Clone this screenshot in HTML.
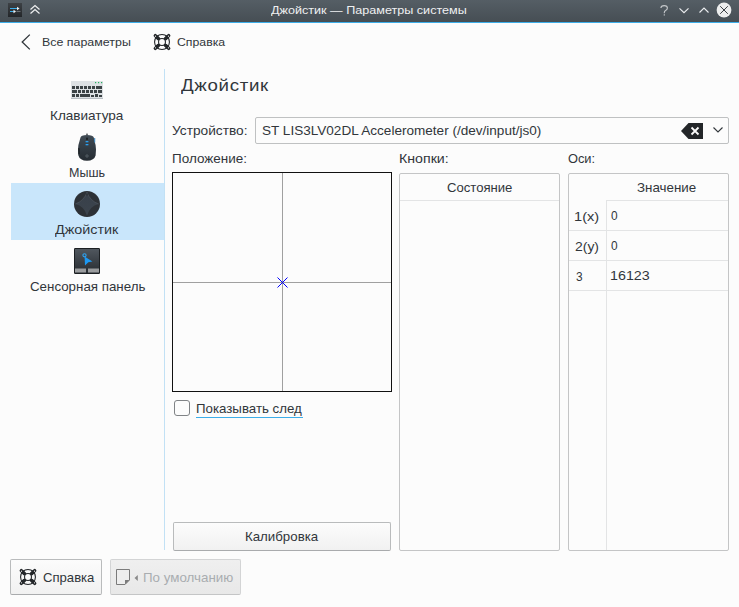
<!DOCTYPE html>
<html><head><meta charset="utf-8"><style>
*{margin:0;padding:0;box-sizing:border-box}
html,body{width:739px;height:607px;overflow:hidden;background:#fcfcfc;font-family:"Liberation Sans",sans-serif;color:#31363b}
.a{position:absolute}
.t{position:absolute;white-space:nowrap;transform-origin:0 0}
svg{position:absolute;overflow:visible}
</style></head><body>
<div class="a" style="left:0;top:0;width:739px;height:22px;background:linear-gradient(#555e65,#464e54)"></div>
<div class="a" style="left:0;top:22px;width:739px;height:1px;background:#3daee9"></div>
<svg style="left:8px;top:3px" width="14" height="14" viewBox="0 0 14 14">
<defs><linearGradient id="ag" x1="0" y1="0" x2="0" y2="1"><stop offset="0" stop-color="#3d4145"/><stop offset="1" stop-color="#232629"/></linearGradient></defs>
<rect x="0" y="0" width="14" height="14" fill="url(#ag)"/>
<rect x="2" y="5" width="8" height="1" fill="#3daee9"/><path d="M9 3.8 L11.5 5.5 L9 7.2 Z" fill="#eff0f1"/>
<rect x="2" y="8" width="4" height="1" fill="#3daee9"/><rect x="8.5" y="8" width="4" height="1" fill="#6b7075"/><path d="M5.5 6.8 L8 8.5 L5.5 10.2 Z" fill="#eff0f1"/>
</svg>
<svg style="left:30px;top:5px" width="10" height="9" viewBox="0 0 10 9">
<path d="M0.5 4.5 L5 0.5 L9.5 4.5 M0.5 8.5 L5 4.5 L9.5 8.5" fill="none" stroke="#eff0f1" stroke-width="1.2"/>
</svg>
<svg style="left:660px;top:5px" width="9" height="11" viewBox="0 0 9 11"><path d="M0.9 3 Q0.9 0.6 4.2 0.6 Q7.4 0.6 7.4 3 Q7.4 4.6 5.6 5.4 Q4.3 6 4.3 7.6 V8.2" fill="none" stroke="#c4c7ca" stroke-width="1.1"/><rect x="3.7" y="9.3" width="1.2" height="1.2" fill="#c4c7ca"/></svg>
<svg style="left:679px;top:8px" width="10" height="6" viewBox="0 0 10 6"><path d="M0.5 0.3 L5 4.7 L9.5 0.3" fill="none" stroke="#eceef0" stroke-width="1.1"/></svg>
<svg style="left:699px;top:7px" width="10" height="6" viewBox="0 0 10 6"><path d="M0.5 5.5 L5 1 L9.5 5.5" fill="none" stroke="#eceef0" stroke-width="1.1"/></svg>
<svg style="left:716px;top:2px" width="16" height="16" viewBox="0 0 16 16"><circle cx="8" cy="8" r="7.4" fill="#eceded"/>
<path d="M4.2 4.2 L11.8 11.8 M11.8 4.2 L4.2 11.8" stroke="#3a3f44" stroke-width="1"/></svg>
<svg style="left:21px;top:34px" width="10" height="16" viewBox="0 0 10 16"><path d="M8.8 0.6 L1.2 8 L8.8 15.4" fill="none" stroke="#31363b" stroke-width="1.3"/></svg>
<svg style="left:154px;top:34px" width="16" height="16" viewBox="0 0 16 16">
<circle cx="8" cy="8" r="7.45" fill="none" stroke="#232629" stroke-width="1.1"/>
<path d="M2 2 L14 14 M14 2 L2 14" stroke="#232629" stroke-width="2.7"/>
<path d="M1.3 1.6 L4.2 4.5 M14.7 1.6 L11.8 4.5 M1.3 14.4 L4.2 11.5 M14.7 14.4 L11.8 11.5" stroke="#232629" stroke-width="3.4" stroke-linecap="round"/>
<circle cx="8" cy="8" r="3.45" fill="#fcfcfc" stroke="#232629" stroke-width="1.1"/>
<circle cx="1.5" cy="2.2" r="0.6" fill="#fcfcfc"/><circle cx="14.5" cy="2.2" r="0.6" fill="#fcfcfc"/>
<circle cx="1.5" cy="13.8" r="0.6" fill="#fcfcfc"/><circle cx="14.5" cy="13.8" r="0.6" fill="#fcfcfc"/>
</svg>
<div class="a" style="left:11px;top:183px;width:153px;height:57px;background:#c9e6fb"></div>
<div class="a" style="left:164px;top:69px;width:1px;height:481px;background:#c2e1f5"></div>
<svg style="left:71px;top:81px" width="32" height="18" viewBox="0 0 32 18"><rect x="0" y="0" width="32" height="18" fill="#dde1e4"/><rect x="0" y="17" width="32" height="1" fill="#b8bec3"/><rect x="24" y="1" width="1.2" height="1.2" fill="#27ae60"/><rect x="27" y="1" width="1.2" height="1.2" fill="#27ae60"/><rect x="30" y="1" width="1.2" height="1.2" fill="#27ae60"/><rect x="1" y="5" width="3" height="3" fill="#3b4245"/><rect x="5" y="5" width="3" height="3" fill="#3b4245"/><rect x="9" y="5" width="3" height="3" fill="#3b4245"/><rect x="13" y="5" width="3" height="3" fill="#3b4245"/><rect x="17" y="5" width="3" height="3" fill="#3b4245"/><rect x="21" y="5" width="3" height="3" fill="#3b4245"/><rect x="25" y="5" width="6" height="3" fill="#3b4245"/><rect x="1" y="9" width="5" height="3" fill="#3b4245"/><rect x="7" y="9" width="3" height="3" fill="#3b4245"/><rect x="11" y="9" width="3" height="3" fill="#3b4245"/><rect x="15" y="9" width="3" height="3" fill="#3b4245"/><rect x="19" y="9" width="3" height="3" fill="#3b4245"/><rect x="23" y="9" width="3" height="3" fill="#3b4245"/><rect x="27" y="9" width="4" height="3" fill="#3b4245"/><rect x="1" y="13" width="3" height="3" fill="#3b4245"/><rect x="5" y="13" width="3" height="3" fill="#3b4245"/><rect x="9" y="13" width="10" height="3" fill="#3b4245"/><rect x="20" y="14" width="3" height="2" fill="#3b4245"/><rect x="24" y="13" width="3" height="3" fill="#3b4245"/><rect x="28" y="14" width="3" height="2" fill="#3b4245"/></svg>
<svg style="left:77px;top:132px" width="20" height="30" viewBox="0 0 20 30">
<defs><linearGradient id="mg" x1="0" y1="0" x2="0" y2="1"><stop offset="0" stop-color="#404b55"/><stop offset="1" stop-color="#252c32"/></linearGradient></defs>
<path d="M10 0.8 L10.8 3 H9.2 Z" fill="#232629"/>
<path d="M3.5 5.5 Q3.8 3 10 3 Q16.2 3 16.8 5.5 L17.6 9.5 Q19 13 19 17.5 L18.6 23.5 Q17.2 28.6 10 28.8 Q2.8 28.6 1.4 23.5 L1 17.5 Q1 13 2.4 9.5 Z" fill="url(#mg)"/>
<path d="M1.2 16 L2.8 16.5 L2.8 22 L1.3 22.5 Z" fill="#1e2327"/>
<rect x="9" y="5.5" width="2" height="2.6" rx="0.8" fill="#1c2125"/>
<rect x="8.6" y="9" width="2.8" height="1.3" fill="#2a9ff0"/>
<rect x="8.6" y="12" width="2.8" height="1.3" fill="#2a9ff0"/>
<rect x="17.2" y="6" width="1" height="4.5" fill="#2f7fb8"/>
<circle cx="10" cy="24" r="1.2" fill="none" stroke="#7a848d" stroke-width="0.5"/>
</svg>
<svg style="left:74px;top:191px" width="26" height="26" viewBox="0 0 26 26">
<defs><linearGradient id="jg" x1="0" y1="0" x2="0" y2="1"><stop offset="0" stop-color="#38404a"/><stop offset="1" stop-color="#3c444d"/></linearGradient></defs>
<circle cx="13" cy="13" r="13" fill="#2d3136"/>
<path d="M13 1.2 A19 19 0 0 0 24.8 13 A16 16 0 0 0 13 24.8 A16 16 0 0 0 1.2 13 A19 19 0 0 0 13 1.2 Z" fill="url(#jg)"/>
<path d="M13 1.2 A19 19 0 0 0 24.8 13 M1.2 13 A19 19 0 0 0 13 1.2" fill="none" stroke="#59616a" stroke-width="0.5"/>
<circle cx="13" cy="3.5" r="1.2" fill="#30363c"/>
</svg>
<svg style="left:74px;top:248px" width="26" height="26" viewBox="0 0 26 26">
<defs><linearGradient id="tg" x1="0" y1="0" x2="0" y2="1"><stop offset="0" stop-color="#50575e"/><stop offset="1" stop-color="#272c31"/></linearGradient></defs>
<rect x="0" y="0" width="26" height="26" rx="1.2" fill="#1b1f22"/>
<rect x="1" y="1" width="24" height="24" fill="url(#tg)"/>
<rect x="1" y="20.5" width="11" height="4" fill="#9a9c9e"/>
<rect x="14" y="20.5" width="11" height="4" fill="#9a9c9e"/>
<circle cx="10.5" cy="7.3" r="1.6" fill="none" stroke="#2ea3f2" stroke-width="1.1"/>
<path d="M10.6 8.4 L18.4 13.4 L14.3 14.3 L11 17.4 Z" fill="#1d99f3"/>
</svg>
<div class="a" style="left:255px;top:117px;width:474px;height:27px;border:1px solid #bfc1c2;border-radius:2px;background:#fcfcfc"></div>
<svg style="left:681px;top:123px" width="22" height="16" viewBox="0 0 22 16">
<path d="M0 8 L7.5 0 H22 V16 H7.5 Z" fill="#232629"/>
<path d="M10.5 4.5 L17.5 11.5 M17.5 4.5 L10.5 11.5" stroke="#fcfcfc" stroke-width="1.8"/>
</svg>
<svg style="left:713px;top:127px" width="10" height="6" viewBox="0 0 10 6"><path d="M0.5 0.5 L5 5 L9.5 0.5" fill="none" stroke="#31363b" stroke-width="1.1"/></svg>
<div class="a" style="left:172px;top:172px;width:220px;height:220px;border:1px solid #111;background:#fcfcfc"></div>
<div class="a" style="left:282px;top:173px;width:1px;height:218px;background:#a0a0a0"></div>
<div class="a" style="left:173px;top:282px;width:218px;height:1px;background:#a0a0a0"></div>
<svg style="left:277px;top:277px" width="11" height="11" viewBox="0 0 11 11"><path d="M0.5 0.5 L10.5 10.5 M10.5 0.5 L0.5 10.5" stroke="#0000ff" stroke-width="1"/></svg>
<div class="a" style="left:399px;top:173px;width:161px;height:378px;border:1px solid #c4c5c6;border-radius:2px;background:#fcfcfc"></div>
<div class="a" style="left:400px;top:200px;width:159px;height:1px;background:#e3e4e5"></div>
<div class="a" style="left:568px;top:173px;width:161px;height:378px;border:1px solid #c4c5c6;border-radius:2px;background:#fcfcfc"></div>
<div class="a" style="left:606px;top:200px;width:122px;height:1px;background:#e3e4e5"></div>
<div class="a" style="left:606px;top:200px;width:1px;height:350px;background:#e3e4e5"></div>
<div class="a" style="left:569px;top:230px;width:159px;height:1px;background:#e3e4e5"></div>
<div class="a" style="left:569px;top:260px;width:159px;height:1px;background:#e3e4e5"></div>
<div class="a" style="left:569px;top:290px;width:159px;height:1px;background:#e3e4e5"></div>
<div class="a" style="left:174px;top:400px;width:16px;height:16px;border:1px solid #808386;border-radius:3px;background:#fcfcfc"></div>
<div class="a" style="left:196px;top:417px;width:107px;height:1px;background:#3daee9"></div>
<div class="a" style="left:173px;top:522px;width:218px;height:29px;border:1px solid #b9bbbc;border-bottom-color:#a9abad;border-radius:2px;background:linear-gradient(#fcfcfc,#f1f1f1)"></div>
<div class="a" style="left:10px;top:559px;width:92px;height:36px;border:1px solid #b9bbbc;border-bottom-color:#a9abad;border-radius:2px;background:linear-gradient(#fcfcfc,#f1f1f1)"></div>
<svg style="left:20px;top:569px" width="16" height="16" viewBox="0 0 16 16">
<circle cx="8" cy="8" r="7.45" fill="none" stroke="#232629" stroke-width="1.1"/>
<path d="M2 2 L14 14 M14 2 L2 14" stroke="#232629" stroke-width="2.7"/>
<path d="M1.3 1.6 L4.2 4.5 M14.7 1.6 L11.8 4.5 M1.3 14.4 L4.2 11.5 M14.7 14.4 L11.8 11.5" stroke="#232629" stroke-width="3.4" stroke-linecap="round"/>
<circle cx="8" cy="8" r="3.45" fill="#fcfcfc" stroke="#232629" stroke-width="1.1"/>
<circle cx="1.5" cy="2.2" r="0.6" fill="#fcfcfc"/><circle cx="14.5" cy="2.2" r="0.6" fill="#fcfcfc"/>
<circle cx="1.5" cy="13.8" r="0.6" fill="#fcfcfc"/><circle cx="14.5" cy="13.8" r="0.6" fill="#fcfcfc"/>
</svg>
<div class="a" style="left:110px;top:559px;width:131px;height:36px;border:1px solid #d3d4d5;border-bottom-color:#c4c5c6;border-radius:2px;background:linear-gradient(#efefef,#e8e8e8)"></div>
<svg style="left:116px;top:569px" width="14" height="16" viewBox="0 0 14 16">
<path d="M0.5 0.5 H13.5 V11 L9 15.5 H0.5 Z" fill="#eeeeee" stroke="#7b7b7b" stroke-width="1"/>
<path d="M9 11 H13.5 L9 15.5 Z" fill="#7b7b7b"/>
</svg>
<svg style="left:134px;top:575px" width="4" height="6" viewBox="0 0 4 6"><path d="M3.8 0 V6 L0.5 3 Z" fill="#8a8a8a"/></svg>
<div class="t" style="left:271px;top:5px;font-size:11.5px;line-height:11.5px;transform:scaleX(1.095);color:#eff0f1;">Джойстик — Параметры системы</div>
<div class="t" style="left:42px;top:37px;font-size:11.5px;line-height:11.5px;transform:scaleX(1.0793);color:#31363b;">Все параметры</div>
<div class="t" style="left:177px;top:37px;font-size:11.5px;line-height:11.5px;transform:scaleX(1.0667);color:#31363b;">Справка</div>
<div class="t" style="left:49.5px;top:109px;font-size:13px;line-height:13px;transform:scaleX(1.0423);color:#31363b;">Клавиатура</div>
<div class="t" style="left:68.8px;top:166px;font-size:13px;line-height:13px;transform:scaleX(0.9649);color:#31363b;">Мышь</div>
<div class="t" style="left:55px;top:223px;font-size:13px;line-height:13px;transform:scaleX(1.104);color:#31363b;">Джойстик</div>
<div class="t" style="left:29.7px;top:280px;font-size:13px;line-height:13px;transform:scaleX(1.025);color:#31363b;">Сенсорная панель</div>
<div class="t" style="left:180.5px;top:77px;font-size:17px;line-height:17px;transform:scaleX(1.1);letter-spacing:0.6px;color:#31363b;">Джойстик</div>
<div class="t" style="left:172.4px;top:124px;font-size:13px;line-height:13px;transform:scaleX(1.0535);color:#31363b;">Устройство:</div>
<div class="t" style="left:262.2px;top:124px;font-size:13px;line-height:13px;transform:scaleX(1.0429);color:#31363b;">ST LIS3LV02DL Accelerometer (/dev/input/js0)</div>
<div class="t" style="left:172.4px;top:152px;font-size:13px;line-height:13px;transform:scaleX(1.0361);color:#31363b;">Положение:</div>
<div class="t" style="left:398.9px;top:152px;font-size:13px;line-height:13px;transform:scaleX(1.0911);color:#31363b;">Кнопки:</div>
<div class="t" style="left:567.6px;top:152px;font-size:13px;line-height:13px;transform:scaleX(0.9852);color:#31363b;">Оси:</div>
<div class="t" style="left:446.5px;top:181px;font-size:13px;line-height:13px;transform:scaleX(1.0077);color:#31363b;">Состояние</div>
<div class="t" style="left:637.4px;top:181px;font-size:13px;line-height:13px;transform:scaleX(1.0259);color:#31363b;">Значение</div>
<div class="t" style="left:574.4px;top:210px;font-size:13px;line-height:13px;transform:scaleX(1.1238);color:#31363b;">1(x)</div>
<div class="t" style="left:610.5px;top:209px;font-size:13px;line-height:13px;transform:scaleX(0.9143);color:#31363b;">0</div>
<div class="t" style="left:575.4px;top:240px;font-size:13px;line-height:13px;transform:scaleX(1.0727);color:#31363b;">2(y)</div>
<div class="t" style="left:610.5px;top:239px;font-size:13px;line-height:13px;transform:scaleX(0.9143);color:#31363b;">0</div>
<div class="t" style="left:575.6px;top:270px;font-size:13px;line-height:13px;transform:scaleX(0.9143);color:#31363b;">3</div>
<div class="t" style="left:609.7px;top:269px;font-size:13px;line-height:13px;transform:scaleX(1.1);color:#31363b;">16123</div>
<div class="t" style="left:196.4px;top:402px;font-size:13px;line-height:13px;transform:scaleX(1.0212);color:#31363b;">Показывать след</div>
<div class="t" style="left:244.8px;top:530px;font-size:13px;line-height:13px;transform:scaleX(1.0208);color:#31363b;">Калибровка</div>
<div class="t" style="left:43.4px;top:571px;font-size:13px;line-height:13px;transform:scaleX(1.0078);color:#31363b;">Справка</div>
<div class="t" style="left:142.5px;top:571px;font-size:13px;line-height:13px;transform:scaleX(1.0261);color:#a9adb0;">По умолчанию</div>
</body></html>
